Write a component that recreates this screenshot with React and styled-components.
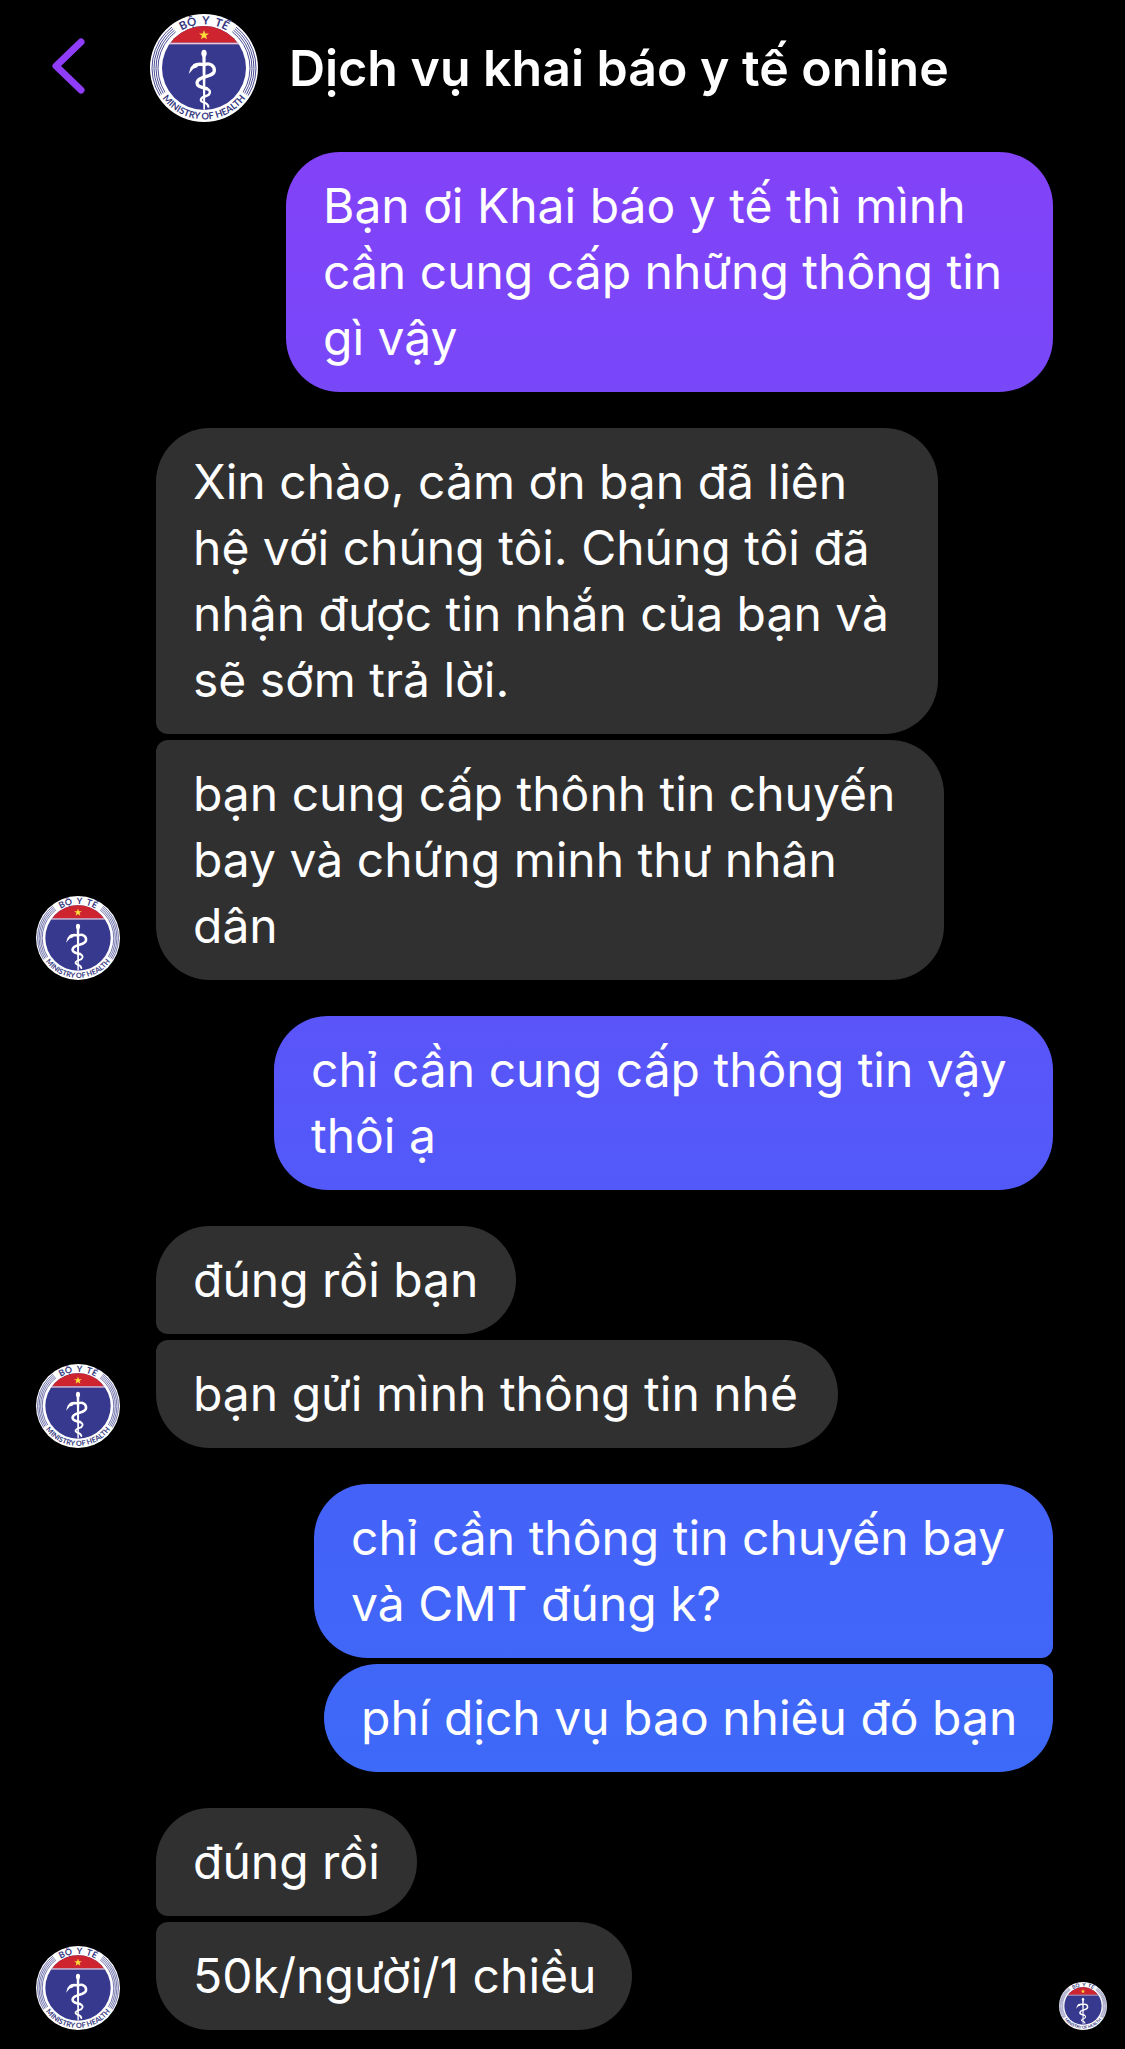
import React from 'react';
import styled, { createGlobalStyle } from 'styled-components';

const groups = [
  {
    from: 'me',
    messages: [
      {
        width: 767,
        text: 'Bạn ơi Khai báo y tế thì mình\ncần cung cấp những thông tin\ngì vậy',
      },
    ],
  },
  {
    from: 'page',
    messages: [
      {
        width: 782,
        text:
          'Xin chào, cảm ơn bạn đã liên\nhệ với chúng tôi. Chúng tôi đã\nnhận được tin nhắn của bạn và\nsẽ sớm trả lời.',
      },
      {
        width: 788,
        text: 'bạn cung cấp thônh tin chuyến\nbay và chứng minh thư nhân\ndân',
      },
    ],
  },
  {
    from: 'me',
    messages: [
      { width: 779, text: 'chỉ cần cung cấp thông tin vậy\nthôi ạ' },
    ],
  },
  {
    from: 'page',
    messages: [
      { width: 360, text: 'đúng rồi bạn' },
      { width: 682, text: 'bạn gửi mình thông tin nhé' },
    ],
  },
  {
    from: 'me',
    messages: [
      { width: 739, text: 'chỉ cần thông tin chuyến bay\nvà CMT đúng k?' },
      { width: 729, text: 'phí dịch vụ bao nhiêu đó bạn' },
    ],
  },
  {
    from: 'page',
    seen: true,
    messages: [
      { width: 261, text: 'đúng rồi' },
      { width: 476, text: '50k/người/1 chiều' },
    ],
  },
];

const Emblem = ({ size }) => {
  const id = React.useId();
  return (
    <EmblemSvg $size={size} viewBox="0 0 324 324" role="img" aria-label="Bộ Y tế">
      <defs>
        <path id={`${id}top`} d="M 31 162 A 131 131 0 0 1 293 162" />
        <path id={`${id}bottom`} d="M 8 162 A 154 154 0 0 0 316 162" />
        <clipPath id={`${id}disc`}>
          <circle cx="162" cy="162" r="126" />
        </clipPath>
      </defs>
      <circle cx="162" cy="162" r="162" fill="#fff" />
      <g fill="none" stroke="#4a4d94" strokeWidth="3">
        {[138, 144, 150, 156].map(r => {
          const point = deg => {
            const a = (deg * Math.PI) / 180;
            return [r * Math.cos(a), r * Math.sin(a)];
          };
          const [ux, uy] = point(52);
          const [lx, ly] = point(32);
          return (
            <path
              key={r}
              d={`M ${162 - ux} ${162 - uy} A ${r} ${r} 0 0 0 ${162 - lx} ${162 + ly}
                M ${162 + ux} ${162 - uy} A ${r} ${r} 0 0 1 ${162 + lx} ${162 + ly}`}
            />
          );
        })}
      </g>
      <g clipPath={`url(#${id}disc)`}>
        <rect x="30" y="30" width="264" height="264" fill="#37398f" />
        <rect x="30" y="30" width="264" height="56" fill="#ce2430" />
        <rect x="30" y="86" width="264" height="5" fill="#e9c6d8" />
      </g>
      <path
        d="M162 48 L165.500 58.500 H177 L168 65 L171 76 L162 69.500 L153 76 L156 65 L147 58.500 H158.500 Z"
        fill="#ffdf3a"
      />
      <path d="M157 126 H167 L165 287 H160 Z" fill="#fff" />
      <ellipse cx="162" cy="118" rx="8" ry="11" fill="#fff" />
      <g fill="none" stroke="#fff" strokeLinecap="round">
        <path
          d="M134 155 C146 146 158 154 166 151 C180 146 194 156 193 170 C192 192 142 184 141 207 C141 219 158 220 170 224"
          strokeWidth="10"
        />
        <path
          d="M170 224 C186 230 180 243 168 246 C152 250 148 260 158 264 C168 267 174 270 175 278"
          strokeWidth="7"
        />
      </g>
      <path d="M116 180 L122 160 L132 149 L146 148 L142 160 L130 164 Z" fill="#fff" />
      <EmblemText $size={34}>
        <textPath href={`#${id}top`} startOffset="50%" textAnchor="middle">
          {'BỘ  Y  TẾ'}
        </textPath>
      </EmblemText>
      <EmblemText $size={28}>
        <textPath href={`#${id}bottom`} startOffset="50%" textAnchor="middle">
          MINISTRY OF HEALTH
        </textPath>
      </EmblemText>
    </EmblemSvg>
  );
};

const MessageGroup = ({ from, messages, seen }) => {
  const mine = from === 'me';
  return (
    <Group $mine={mine}>
      {!mine && <Emblem size={84} />}
      <Bubbles $mine={mine}>
        {messages.map(({ text, width }) => (
          <Bubble key={text} $mine={mine} $width={width}>
            {text}
          </Bubble>
        ))}
      </Bubbles>
      {seen && <Emblem size={48} />}
    </Group>
  );
};

const App = () => {
  return (
    <Page>
      <GlobalStyle />
      <Header>
        <BackBtn aria-label="Quay lại">
          <svg width="40" height="60" viewBox="0 0 40 60">
            <path
              d="M33 4 L8 28 L33 52"
              fill="none"
              stroke="#8f3dfb"
              strokeWidth="7"
              strokeLinecap="round"
              strokeLinejoin="round"
            />
          </svg>
        </BackBtn>
        <Emblem size={108} />
        <Title>Dịch vụ khai báo y tế online</Title>
      </Header>
      <Thread>
        {groups.map((group, i) => (
          <MessageGroup key={i} {...group} />
        ))}
      </Thread>
    </Page>
  );
};

export default App;

const GlobalStyle = createGlobalStyle`
  * {
    box-sizing: border-box;
  }
  body {
    margin: 0;
    background-color: #000;
  }
`;

const Page = styled.div`
  min-height: 100vh;
  background-color: #000;
  color: #fff;
  font-family: Inter, 'Liberation Sans', sans-serif;
`;

const Header = styled.header`
  display: flex;
  align-items: center;
  padding: 14px 48px;
`;

const BackBtn = styled.button`
  display: flex;
  width: 102px;
  padding: 0;
  background: none;
  border: none;
  cursor: pointer;
`;

const Title = styled.h1`
  margin: 0 0 0 31px;
  font-size: 50px;
  font-weight: 600;
  line-height: 66px;
`;

const Thread = styled.main`
  display: flex;
  flex-direction: column;
  gap: 36px;
  padding: 16px 18px 19px 36px;
`;

const Group = styled.section`
  display: flex;
  align-items: flex-end;
  gap: 36px;
  padding-right: ${({ $mine }) => ($mine ? '54px' : '0')};
`;

const Bubbles = styled.div`
  flex: 1;
  display: flex;
  flex-direction: column;
  align-items: ${({ $mine }) => ($mine ? 'flex-end' : 'flex-start')};
  gap: 6px;
`;

const Bubble = styled.div`
  width: ${({ $width }) => $width}px;
  max-width: 100%;
  padding: 21px 24px 21px 37px;
  border-radius: 54px;
  background: ${({ $mine }) =>
    $mine
      ? 'linear-gradient(#8a3ff8 0%, #5a55f9 50%, #4561f8 72%, #3d6af8 87%) fixed'
      : '#303030'};
  font-size: 48px;
  line-height: 66px;
  white-space: pre-line;

  &:not(:last-child) {
    ${({ $mine }) =>
      $mine ? 'border-bottom-right-radius' : 'border-bottom-left-radius'}: 12px;
  }
  &:not(:first-child) {
    ${({ $mine }) =>
      $mine ? 'border-top-right-radius' : 'border-top-left-radius'}: 12px;
  }
`;

const EmblemSvg = styled.svg`
  flex: none;
  width: ${({ $size }) => $size}px;
  height: ${({ $size }) => $size}px;
  overflow: visible;
`;

const EmblemText = styled.text`
  fill: #34377f;
  font-family: Lato, 'Liberation Sans', sans-serif;
  font-size: ${({ $size }) => $size}px;
  font-weight: 700;
  white-space: pre;
`;
